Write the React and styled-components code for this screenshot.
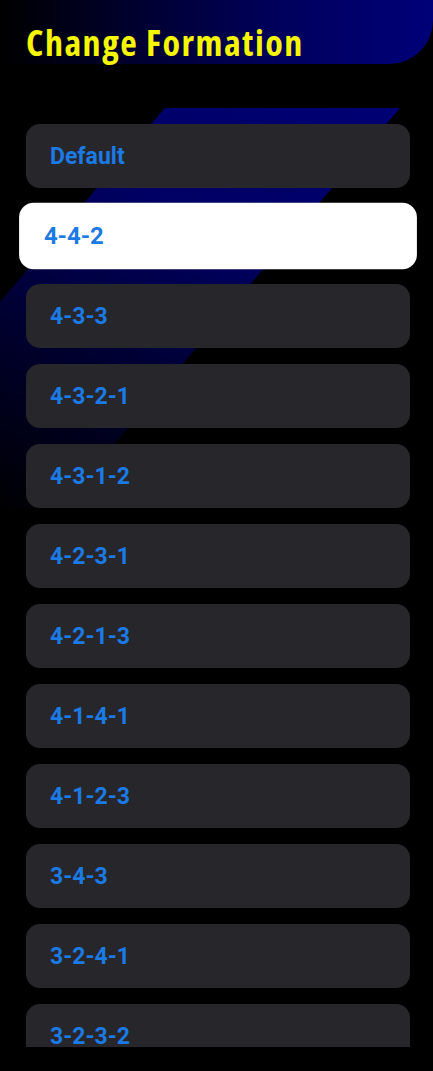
import React from "react";
import styled, { createGlobalStyle } from "styled-components";

const GlobalStyle = createGlobalStyle`
  html, body { margin: 0; padding: 0; background: #000; }
  * { box-sizing: border-box; }
`;

const Page = styled.div`
  position: relative;
  width: 433px;
  height: 1071px;
  background: #000;
  overflow: hidden;
  font-family: Roboto, "Noto Sans", sans-serif;
`;

const Header = styled.header`
  position: relative;
  z-index: 1;
  height: 64px;
  display: flex;
  align-items: flex-end;
  padding: 0 0 3px 26px;
  border-bottom-right-radius: 44px;
  background: linear-gradient(90deg, #000 0%, #00002e 30%, #000060 68%, #000078 100%);
`;

const Title = styled.h1`
  margin: 0;
  color: #f6f600;
  font-family: "Open Sans", "Noto Sans", sans-serif;
  font-stretch: 87.5%;
  font-weight: 700;
  font-size: 36px;
  letter-spacing: 1.5px;
  line-height: 1;
`;

const Stripe = styled.div`
  position: absolute;
  top: 108px;
  left: -200px;
  width: 600px;
  height: 400px;
  clip-path: polygon(365px 0, 600px 0, 260px 400px, 25px 400px);
  background: linear-gradient(205deg, #000074 0%, #000064 30%, #00002c 60%, #000000 88%);
  pointer-events: none;
`;

const List = styled.div`
  position: relative;
  z-index: 1;
  margin-top: 60px;
  height: 923px;
  padding: 0 23px 0 26px;
  display: flex;
  flex-direction: column;
  gap: 16px;
  overflow: hidden;
`;

const Option = styled.div`
  flex: 0 0 64px;
  display: flex;
  align-items: center;
  padding: 1px 0 0 24px;
  border-radius: 14px;
  background: ${(p) => (p.$active ? "#ffffff" : "#26262b")};
  color: #1b7ae3;
  font-family: Roboto, "Noto Sans", sans-serif;
  font-weight: 700;
  font-size: 23px;
  transform: ${(p) => (p.$active ? "scale(1.036)" : "none")};
`;

const formations = [
  "Default",
  "4-4-2",
  "4-3-3",
  "4-3-2-1",
  "4-3-1-2",
  "4-2-3-1",
  "4-2-1-3",
  "4-1-4-1",
  "4-1-2-3",
  "3-4-3",
  "3-2-4-1",
  "3-2-3-2",
];

export default function App() {
  return (
    <Page>
      <GlobalStyle />
      <Header>
        <Title>Change Formation</Title>
      </Header>
      <Stripe />
      <List>
        {formations.map((f) => (
          <Option key={f} $active={f === "4-4-2"}>
            {f}
          </Option>
        ))}
      </List>
    </Page>
  );
}
